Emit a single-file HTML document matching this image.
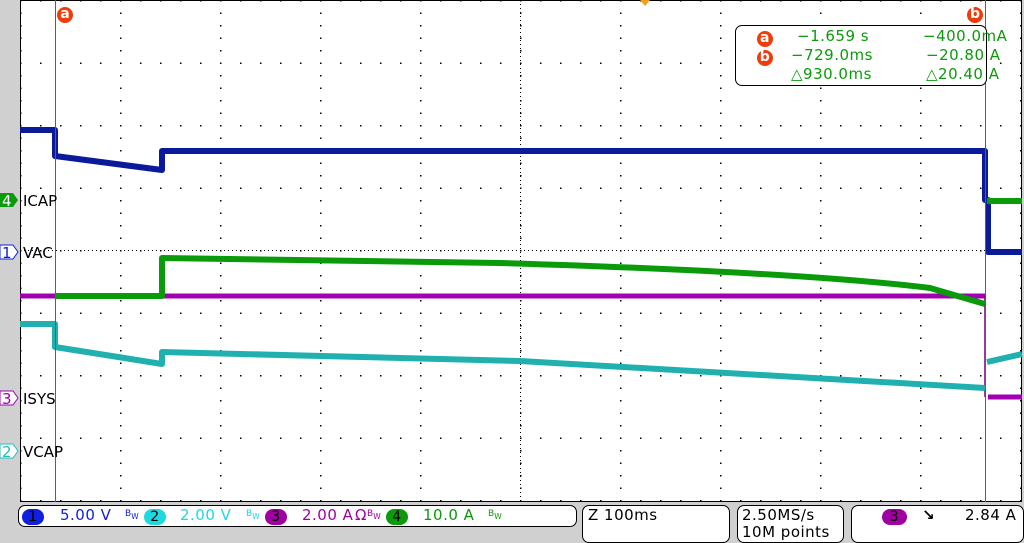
<!DOCTYPE html>
<html><head><meta charset="utf-8"><style>
body{margin:0;width:1024px;height:543px;background:#d0d0d0;overflow:hidden;position:relative;font-family:"DejaVu Sans","Liberation Sans",sans-serif}
.box{position:absolute;background:#fff;border:1px solid #000;border-radius:7px;box-sizing:border-box}
.t{position:absolute;font-size:15px;white-space:nowrap;letter-spacing:0.5px}
.pill{display:inline-block;width:22px;height:16px;border-radius:8px;text-align:center;color:#000;font-size:14px;line-height:16px}
.ab{display:inline-block;width:16px;height:16px;border-radius:8px;background:#f03c0a;color:#fff;font-weight:bold;text-align:center;line-height:15px;font-size:14px}
.bw{position:absolute;font-size:9px;top:509px}
</style></head><body>
<svg width="1024" height="543" style="position:absolute;left:0;top:0">
<defs>
<pattern id="hd" width="20" height="62.5" patternUnits="userSpaceOnUse" x="20" y="0"><rect x="0" y="0" width="1.5" height="1.5" fill="#000"/></pattern>
<pattern id="vd" width="100" height="12.5" patternUnits="userSpaceOnUse" x="20" y="0"><rect x="0" y="0" width="1.5" height="1.5" fill="#000"/></pattern>
</defs>
<rect x="20" y="0" width="1002" height="502" fill="#fff"/>
<rect x="20" y="0" width="1002" height="502" fill="url(#hd)"/>
<rect x="20" y="0" width="1002" height="502" fill="url(#vd)"/>
<line x1="20" y1="250.5" x2="1022" y2="250.5" stroke="#000" stroke-dasharray="1 3"/>
<line x1="520.5" y1="0" x2="520.5" y2="502" stroke="#000" stroke-dasharray="1 3"/>
<line x1="20.5" y1="0" x2="20.5" y2="502" stroke="#000"/>
<line x1="1021.5" y1="0" x2="1021.5" y2="502" stroke="#000"/>
<line x1="20" y1="0.5" x2="1022" y2="0.5" stroke="#000"/>
<line x1="20" y1="501.5" x2="1022" y2="501.5" stroke="#000"/>
<g fill="none" stroke-linejoin="round">
<path d="M20 130 H55 V156 L162 170 V151 H985 V200 H988 V252 H1022" stroke="#0a1a9a" stroke-width="6"/>
<path d="M20 296 H985 M988 397 H1022" stroke="#a000b0" stroke-width="5"/>
<path d="M985 296 V397" stroke="#700070" stroke-width="1.5"/>
<path d="M55 296 H162 V258 L500 263 Q800 272 930 288 L985 304 M987 201 H1022" stroke="#0a9a0a" stroke-width="6"/>
<path d="M20 324 H55 V347 L162 364 V352 L520 361 L985 388 M987 362 L1022 354" stroke="#20b0b0" stroke-width="6"/>
</g>
<line x1="55.5" y1="0" x2="55.5" y2="502" stroke="#0a9a0a"/>
<line x1="985.5" y1="0" x2="985.5" y2="502" stroke="#0a9a0a"/>
<path d="M640 0 L650 0 L645 6Z" fill="#f0a020"/>
<g font-family="DejaVu Sans" font-size="15">
<path d="M0 193 H13 L18 200 L13 207 H0Z" fill="#0a9a0a"/><text x="2" y="206" fill="#fff">4</text>
<path d="M0 245 H13 L18 252 L13 259 H0Z" fill="#fff" stroke="#1020e0"/><text x="2" y="258" fill="#1020e0">1</text>
<path d="M0 391 H13 L18 398 L13 405 H0Z" fill="#fff" stroke="#a000b0"/><text x="2" y="404" fill="#a000b0">3</text>
<path d="M0 444 H13 L18 451 L13 458 H0Z" fill="#fff" stroke="#20c0c0"/><text x="2" y="457" fill="#20c0c0">2</text>
<text x="23" y="206" fill="#000">ICAP</text>
<text x="23" y="258" fill="#000">VAC</text>
<text x="23" y="404" fill="#000">ISYS</text>
<text x="23" y="457" fill="#000">VCAP</text>
</g>
</svg>
<span class="ab" style="position:absolute;left:57px;top:7px">a</span>
<span class="ab" style="position:absolute;left:967px;top:7px">b</span>
<div class="box" style="left:735px;top:25px;width:252px;height:61px;"></div>
<div class="t" style="left:757px;top:28px;color:#0a9a0a"><span class="ab">a</span></div>
<div class="t" style="left:757px;top:47px;color:#0a9a0a"><span class="ab">b</span></div>
<div class="t" style="left:797px;top:27px;color:#0a9a0a">−1.659 s</div>
<div class="t" style="left:791px;top:46px;color:#0a9a0a">−729.0ms</div>
<div class="t" style="left:791px;top:65px;color:#0a9a0a">△930.0ms</div>
<div class="t" style="left:923px;top:27px;color:#0a9a0a">−400.0mA</div>
<div class="t" style="left:926px;top:46px;color:#0a9a0a">−20.80 A</div>
<div class="t" style="left:926px;top:65px;color:#0a9a0a">△20.40 A</div>
<div class="box" style="left:18px;top:505px;width:559px;height:22px"></div>
<div class="t" style="left:22px;top:507px"><span class="pill" style="background:#1020e0">1</span></div>
<div class="t" style="left:60px;top:506px;color:#1020e0">5.00 V</div>
<div class="bw" style="left:125px;color:#1020e0">B<sub>W</sub></div>
<div class="t" style="left:144px;top:507px"><span class="pill" style="background:#20d8e0">2</span></div>
<div class="t" style="left:180px;top:506px;color:#20d8e0">2.00 V</div>
<div class="bw" style="left:246px;color:#20d8e0">B<sub>W</sub></div>
<div class="t" style="left:265px;top:507px"><span class="pill" style="background:#a000a0">3</span></div>
<div class="t" style="left:302px;top:506px;color:#a000a0">2.00 A</div>
<div class="t" style="left:355px;top:506px;color:#a000a0">Ω</div>
<div class="bw" style="left:367px;color:#a000a0">B<sub>W</sub></div>
<div class="t" style="left:386px;top:507px"><span class="pill" style="background:#0a9a0a">4</span></div>
<div class="t" style="left:423px;top:506px;color:#0a9a0a">10.0 A</div>
<div class="bw" style="left:488px;color:#0a9a0a">B<sub>W</sub></div>
<div class="box" style="left:582px;top:505px;width:148px;height:38px"></div>
<div class="t" style="left:588px;top:506px;color:#000">Z 100ms</div>
<div class="box" style="left:737px;top:505px;width:107px;height:38px"></div>
<div class="t" style="left:742px;top:506px;color:#000">2.50MS/s</div>
<div class="t" style="left:742px;top:523px;color:#000">10M points</div>
<div class="box" style="left:851px;top:505px;width:173px;height:38px"></div>
<div class="t" style="left:882px;top:507px"><span class="pill" style="background:#a000a0;width:25px">3</span></div>
<div class="t" style="left:922px;top:506px;color:#000;font-weight:bold">↘</div>
<div class="t" style="left:965px;top:506px;color:#000">2.84 A</div>
</body></html>
